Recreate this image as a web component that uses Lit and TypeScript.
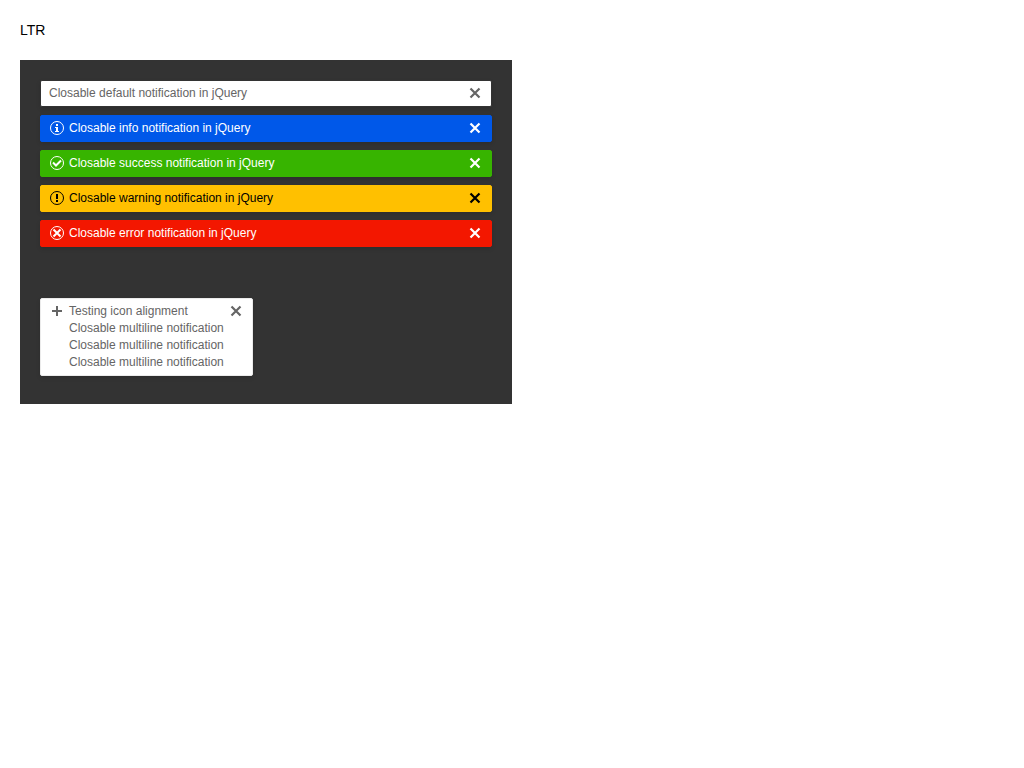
import { LitElement, html, css, svg } from "lit";
import { customElement, property } from "lit/decorators.js";

type Kind = "default" | "info" | "success" | "warning" | "error" | "plus";

const ring = svg`<circle cx="8" cy="8" r="6.5" fill="none" stroke="currentColor"></circle>`;

const glyphs: Record<string, unknown> = {
  info: svg`${ring}<path fill="currentColor" d="M7 4h2v2H7zM6 7h3v4h1v1H6v-1h1V8H6z"></path>`,
  success: svg`${ring}<path fill="none" stroke="currentColor" stroke-width="2" d="M4 7.5l3 3 5-5"></path>`,
  warning: svg`${ring}<path fill="currentColor" d="M7 4h2v5H7zM7 10h2v2H7z"></path>`,
  error: svg`${ring}<path fill="none" stroke="currentColor" stroke-width="2" d="M4.5 4.5l7 7M11.5 4.5l-7 7"></path>`,
  plus: svg`<path fill="currentColor" d="M7 3h2v4h4v2H9v4H7V9H3V7h4z"></path>`,
};

@customElement("closable-notification")
export class ClosableNotification extends LitElement {
  @property({ reflect: true }) kind: Kind = "default";

  static styles = css`
    :host {
      display: flex;
      align-items: flex-start;
      gap: 4px;
      box-sizing: border-box;
      padding: 4px 8px;
      border: 1px solid;
      border-radius: 2px;
      font-size: 12px;
      line-height: 17px;
      box-shadow: 0 2px 4px rgba(0, 0, 0, 0.12);
    }
    :host([kind="default"]) {
      color: #656565;
      background: #fff;
      border-color: #333;
    }
    :host([kind="plus"]) {
      color: #656565;
      background: #fff;
      border-color: #ebebeb;
    }
    :host([kind="info"]) {
      color: #fff;
      background: #0058e9;
      border-color: #0058e9;
    }
    :host([kind="success"]) {
      color: #fff;
      background: #37b400;
      border-color: #37b400;
    }
    :host([kind="warning"]) {
      color: #000;
      background: #ffc000;
      border-color: #ffc000;
    }
    :host([kind="error"]) {
      color: #fff;
      background: #f31700;
      border-color: #f31700;
    }
    .content {
      flex: 1;
    }
    svg {
      display: block;
      flex: none;
      width: 16px;
      height: 16px;
    }
    .close {
      flex: none;
      padding: 0;
      border: 0;
      background: none;
      color: inherit;
      cursor: pointer;
    }
  `;

  render() {
    const glyph = glyphs[this.kind];
    return html`
      ${glyph ? html`<svg viewBox="0 0 16 16" aria-hidden="true">${glyph}</svg>` : ""}
      <div class="content"><slot></slot></div>
      <button class="close" type="button" aria-label="Close" @click=${() => this.remove()}>
        <svg viewBox="0 0 16 16" aria-hidden="true">
          <path fill="none" stroke="currentColor" stroke-width="2.2" d="M3.5 3.5l9 9M12.5 3.5l-9 9"></path>
        </svg>
      </button>
    `;
  }
}

@customElement("app-root")
export class AppRoot extends LitElement {
  static styles = css`
    :host {
      display: block;
      padding: 20px;
      font-family: "Liberation Sans", Arial, sans-serif;
      font-size: 14px;
      line-height: 20px;
      color: #000;
    }
    .column {
      width: 50%;
    }
    .title {
      margin: 0 0 20px;
    }
    .panel {
      padding: 20px 20px 28px;
      background: #333;
    }
    .stack {
      display: flex;
      flex-direction: column;
      gap: 8px;
    }
    .multiline {
      display: flex;
      margin-top: 51px;
    }
  `;

  render() {
    const kinds: Kind[] = ["default", "info", "success", "warning", "error"];
    return html`
      <main class="column">
        <p class="title">LTR</p>
        <section class="panel">
          <div class="stack">
            ${kinds.map(
              (kind) => html`<closable-notification kind=${kind}>Closable ${kind} notification in jQuery</closable-notification>`
            )}
          </div>
          <div class="multiline">
            <closable-notification kind="plus">
              Testing icon alignment<br />Closable multiline notification<br />Closable multiline notification<br />Closable multiline notification
            </closable-notification>
          </div>
        </section>
      </main>
    `;
  }
}
